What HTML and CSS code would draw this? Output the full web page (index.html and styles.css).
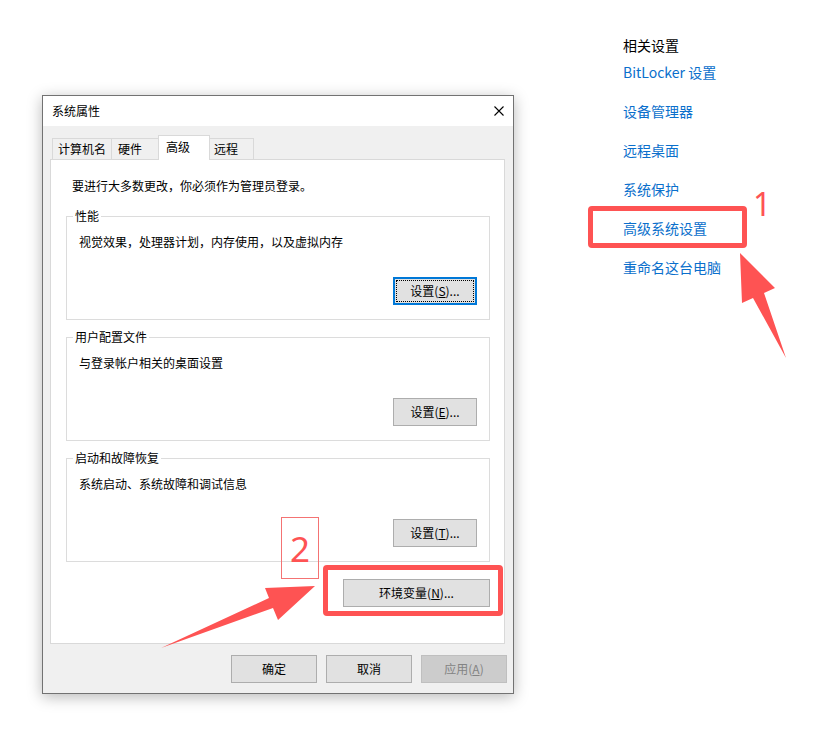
FILE: index.html
```html
<!DOCTYPE html>
<html lang="zh-CN">

<head>
    <meta charset="UTF-8">
    <title>系统属性</title>
    <link rel="stylesheet" href="styles.css">
</head>

<body>

    <div class="page">
        <div class="dialog">
            <div class="title_bar">
                <span class="title">系统属性</span>
                <svg class="close" width="10" height="10" viewBox="0 0 10 10">
                    <path d="M0.5 0.5 L9.5 9.5 M9.5 0.5 L0.5 9.5" stroke="#000" stroke-width="1.1" fill="none" />
                </svg>
            </div>
            <div class="dialog_body">
                <div class="tabs">
                    <div class="tab tab_name">计算机名</div>
                    <div class="tab tab_hw">硬件</div>
                    <div class="tab tab_adv active">高级</div>
                    <div class="tab tab_remote">远程</div>
                </div>
                <div class="tab_panel">
                    <p class="notice">要进行大多数更改，你必须作为管理员登录。</p>

                    <fieldset class="group">
                        <legend>性能</legend>
                        <p>视觉效果，处理器计划，内存使用，以及虚拟内存</p>
                        <div class="group_btns">
                            <button class="btn btn_default">设置(<u>S</u>)...</button>
                        </div>
                    </fieldset>

                    <fieldset class="group">
                        <legend>用户配置文件</legend>
                        <p>与登录帐户相关的桌面设置</p>
                        <div class="group_btns">
                            <button class="btn">设置(<u>E</u>)...</button>
                        </div>
                    </fieldset>

                    <fieldset class="group">
                        <legend>启动和故障恢复</legend>
                        <p>系统启动、系统故障和调试信息</p>
                        <div class="group_btns">
                            <button class="btn">设置(<u>T</u>)...</button>
                        </div>
                    </fieldset>

                    <div class="env_row">
                        <div class="env_wrap">
                            <button class="btn btn_env">环境变量(<u>N</u>)...</button>
                            <span class="mark mark_env"></span>
                            <span class="num_box">2</span>
                        </div>
                    </div>
                </div>
                <div class="dialog_btns">
                    <button class="btn btn_wide">确定</button>
                    <button class="btn btn_wide">取消</button>
                    <button class="btn btn_wide" disabled>应用(<u>A</u>)</button>
                </div>
            </div>
        </div>

        <div class="related">
            <h2>相关设置</h2>
            <ul>
                <li><a href="#">BitLocker 设置</a></li>
                <li><a href="#">设备管理器</a></li>
                <li><a href="#">远程桌面</a></li>
                <li><a href="#">系统保护</a></li>
                <li class="marked">
                    <a href="#">高级系统设置</a>
                    <span class="mark mark_link"></span>
                    <span class="num_one">1</span>
                </li>
                <li><a href="#">重命名这台电脑</a></li>
            </ul>
        </div>

        <!-- 标注箭头 -->
        <svg class="arrows" width="828" height="743" viewBox="0 0 828 743">
            <polygon points="740,253 775,288 764,293 786,358 753,298 742,303" fill="#fe5353" />
            <polygon points="315,586 278,620 273,608 161,648 269,598 265,588" fill="#fe5353" />
        </svg>
    </div>

</body>

</html>
```

FILE: styles.css
```css
* {
    margin: 0;
    padding: 0;
    box-sizing: border-box;
}

body {
    background: #fff;
    font-family: "Noto Sans CJK SC", "Noto Sans", sans-serif;
    font-size: 12px;
    color: #000;
}

.page {
    position: relative;
    width: 828px;
    height: 743px;
    display: flex;
    align-items: flex-start;
    overflow: hidden;
}

/* 对话框 */
.dialog {
    width: 472px;
    margin: 95px 0 0 42px;
    border: 1px solid #727272;
    background: #f0f0f0;
    box-shadow: 0 3px 14px rgba(0, 0, 0, .28);
}

.title_bar {
    height: 30px;
    background: #fff;
    display: flex;
    align-items: center;
    justify-content: space-between;
    padding: 0 9px 0 9px;
    line-height: 16px;
}

.close {
    display: block;
    margin-top: -1px;
}

.dialog_body {
    padding: 9px 8px 10px 7px;
}

.tabs {
    display: flex;
    align-items: flex-end;
    margin: 0 0 -1px 2px;
    position: relative;
    z-index: 1;
}

.tab {
    height: 21px;
    margin: 0 -1px 1px 0;
    padding-left: 5px;
    border: 1px solid #d9d9d9;
    border-bottom: none;
    background: #f0f0f0;
    line-height: 20px;
}

.tab_name {
    width: 60px;
}

.tab_hw {
    width: 48px;
    padding-left: 6px;
}

.tab_adv {
    width: 52px;
    padding-left: 7px;
}

.tab_remote {
    width: 45px;
    padding-left: 4px;
}

.tab.active {
    height: 25px;
    margin-bottom: 0;
    background: #fff;
    line-height: 22px;
    position: relative;
}

.tab_panel {
    height: 485px;
    background: #fff;
    border: 1px solid #d9d9d9;
    padding: 18px 14px 0 15px;
}

.notice {
    line-height: 16px;
    padding-left: 6px;
}

.group {
    margin-top: 9px;
    padding: 10px 12px 14px 12px;
    border: 1px solid #dcdcdc;
    min-width: 0;
}

.notice + .group {
    margin-top: 14px;
}

.group legend {
    padding: 0 2px;
    margin-left: -6px;
    line-height: 16px;
}

.group p {
    line-height: 16px;
}

.group_btns {
    display: flex;
    justify-content: flex-end;
    margin-top: 27px;
}

/* 按钮 */
.btn {
    width: 84px;
    height: 28px;
    border: 1px solid #adadad;
    background: #e1e1e1;
    font-family: "Noto Sans CJK SC", "Noto Sans", sans-serif;
    font-size: 12px;
    line-height: 16px;
    color: #000;
}

.btn u {
    text-underline-offset: 1px;
}

.btn_default {
    border: 2px solid #0078d7;
    outline: 1px dotted #000;
    outline-offset: -4px;
}

.btn:disabled {
    background: #cccccc;
    border-color: #bfbfbf;
    color: #838383;
}

.env_row {
    display: flex;
    justify-content: flex-end;
    margin-top: 17px;
}

.env_wrap {
    position: relative;
}

.btn_env {
    display: block;
    width: 147px;
}

.dialog_btns {
    display: flex;
    justify-content: flex-end;
    gap: 9px;
    margin: 11px -2px 0 0;
}

.btn_wide {
    width: 86px;
}

/* 右侧相关设置 */
.related {
    margin: 35px 0 0 109px;
    font-size: 14px;
}

.related h2 {
    font-size: 14px;
    font-weight: normal;
    line-height: 20px;
    color: #000;
}

.related ul {
    list-style: none;
    margin-top: 7px;
}

.related li {
    line-height: 20px;
    margin-bottom: 19px;
    white-space: nowrap;
}

.related a {
    color: #0a6fcc;
    text-decoration: none;
}

.marked {
    position: relative;
}

/* 红色标注 */
.mark {
    position: absolute;
    border: 5px solid #fe5353;
    border-radius: 4px;
}

.mark_link {
    left: -35px;
    top: -12px;
    width: 159px;
    height: 42px;
}

.mark_env {
    left: -20px;
    top: -14px;
    width: 180px;
    height: 51px;
}

.num_one {
    position: absolute;
    left: 130px;
    top: -30px;
    font-family: "Noto Sans", sans-serif;
    font-size: 32px;
    line-height: 32px;
    color: #fe5353;
}

.num_box {
    position: absolute;
    left: -62px;
    top: -62px;
    width: 38px;
    height: 62px;
    border: 1px solid #f47373;
    display: flex;
    align-items: center;
    justify-content: center;
    font-family: "Noto Sans", sans-serif;
    font-size: 35px;
    line-height: 35px;
    color: #fe5353;
}

.arrows {
    position: absolute;
    left: 0;
    top: 0;
    pointer-events: none;
}
```
